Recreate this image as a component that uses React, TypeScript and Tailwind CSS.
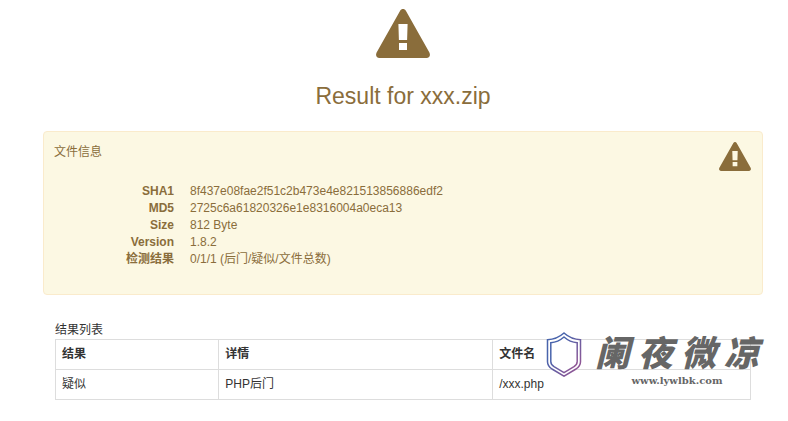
type IconProps = { className?: string };

const fileInfo = [
  { label: "SHA1", value: "8f437e08fae2f51c2b473e4e821513856886edf2" },
  { label: "MD5", value: "2725c6a61820326e1e8316004a0eca13" },
  { label: "Size", value: "812 Byte" },
  { label: "Version", value: "1.8.2" },
  { label: "检测结果", value: "0/1/1 (后门/疑似/文件总数)" },
];

const results = [{ result: "疑似", detail: "PHP后门", file: "/xxx.php" }];

function WarningIcon({ className }: IconProps) {
  return (
    <svg
      className={className}
      viewBox="0 0 54 49"
      fill="currentColor"
      fillRule="evenodd"
      aria-hidden="true"
    >
      <path d="M27 0c1.2 0 2.2.6 3 2l23.4 41.5c1.3 2.8.2 5.5-2.900 5.500h-47C.4 49-.7 46.300.6 43.500L24 2c.8-1.400 1.800-2 3-2ZM22.400 15l.5 16h8.200l.5-16ZM23 34v7h8v-7Z" />
    </svg>
  );
}

function ShieldLogo({ className }: IconProps) {
  return (
    <svg className={className} viewBox="0 0 38 46" fill="none" aria-hidden="true">
      <defs>
        <linearGradient id="shield" x1="0" y1="0" x2="1" y2="1">
          <stop offset="0.3" stopColor="#4964ac" />
          <stop offset="1" stopColor="#a05490" />
        </linearGradient>
      </defs>
      <path
        d="M19 2C14.5 6 8.5 8.5 2.5 8.8v22C2.500 34 4 36 7 38L19 45.200 31 38c3-2 4.500-4 4.500-7.200v-22C29.500 8.500 23.500 6 19 2Z"
        fill="#fff"
        stroke="url(#shield)"
        strokeWidth="1.5"
      />
      <path
        d="M19 6C15.200 9.300 10.500 11.400 5.800 11.800v18.700c0 2.300 1 3.800 3.200 5.200L19 41.700l10-6c2.200-1.400 3.200-2.900 3.200-5.200V11.800C27.500 11.400 22.800 9.300 19 6Z"
        stroke="url(#shield)"
        strokeWidth="1.5"
      />
    </svg>
  );
}

function Watermark() {
  return (
    <div className="pointer-events-none absolute right-1 top-9 flex gap-3 text-[#666]">
      <ShieldLogo className="h-[46px] w-[38px]" />
      <div className="flex flex-col items-center">
        <div className="flex gap-2 text-[35px]/[46px] font-black italic">
          <span>阑</span>
          <span>夜</span>
          <span>微</span>
          <span>凉</span>
        </div>
        <span className="font-['DejaVu_Serif'] text-[10px]/[8px] font-bold">
          www.lywlbk.com
        </span>
      </div>
    </div>
  );
}

function FileInfo() {
  return (
    <section className="rounded border border-[#faebcc] bg-[#fcf8e3] pt-[10px] pr-[11px] pb-[26px] pl-[10px] text-[#8a6d3b]">
      <div className="flex h-[41px] items-start justify-between">
        <h2 className="pt-[2px]">文件信息</h2>
        <WarningIcon className="h-[29px] w-8" />
      </div>
      <dl className="grid grid-cols-[120px_1fr] gap-x-4">
        {fileInfo.map((item) => (
          <div key={item.label} className="contents">
            <dt className="text-right font-bold">{item.label}</dt>
            <dd>{item.value}</dd>
          </div>
        ))}
      </dl>
    </section>
  );
}

function ResultTable() {
  return (
    <section className="relative px-3 pt-[27px] text-[#333]">
      <table className="w-full table-fixed border-collapse text-left">
        <caption className="text-left">结果列表</caption>
        <colgroup>
          <col className="w-[23.5%]" />
          <col className="w-[39.4%]" />
          <col />
        </colgroup>
        <thead>
          <tr className="h-[30px]">
            <th className="border border-[#ddd] px-[6px]">结果</th>
            <th className="border border-[#ddd] px-[6px]">详情</th>
            <th className="border border-[#ddd] px-[6px]">文件名</th>
          </tr>
        </thead>
        <tbody>
          {results.map((row) => (
            <tr key={row.file} className="h-[30px]">
              <td className="border border-[#ddd] px-[6px]">{row.result}</td>
              <td className="border border-[#ddd] px-[6px]">{row.detail}</td>
              <td className="border border-[#ddd] px-[6px]">{row.file}</td>
            </tr>
          ))}
        </tbody>
      </table>
      <Watermark />
    </section>
  );
}

function App() {
  return (
    <main className="min-h-screen bg-white pt-[9px] pr-[25px] pb-5 pl-[43px] font-['Liberation_Sans','Noto_Sans_CJK_SC',sans-serif] text-[12px]/[17px]">
      <header className="flex flex-col items-center gap-6 pb-[21px] text-[#8a6d3b]">
        <WarningIcon className="h-[49px] w-[54px]" />
        <h1 className="text-[23px]/[28px]">Result for xxx.zip</h1>
      </header>
      <FileInfo />
      <ResultTable />
    </main>
  );
}

export default App;
